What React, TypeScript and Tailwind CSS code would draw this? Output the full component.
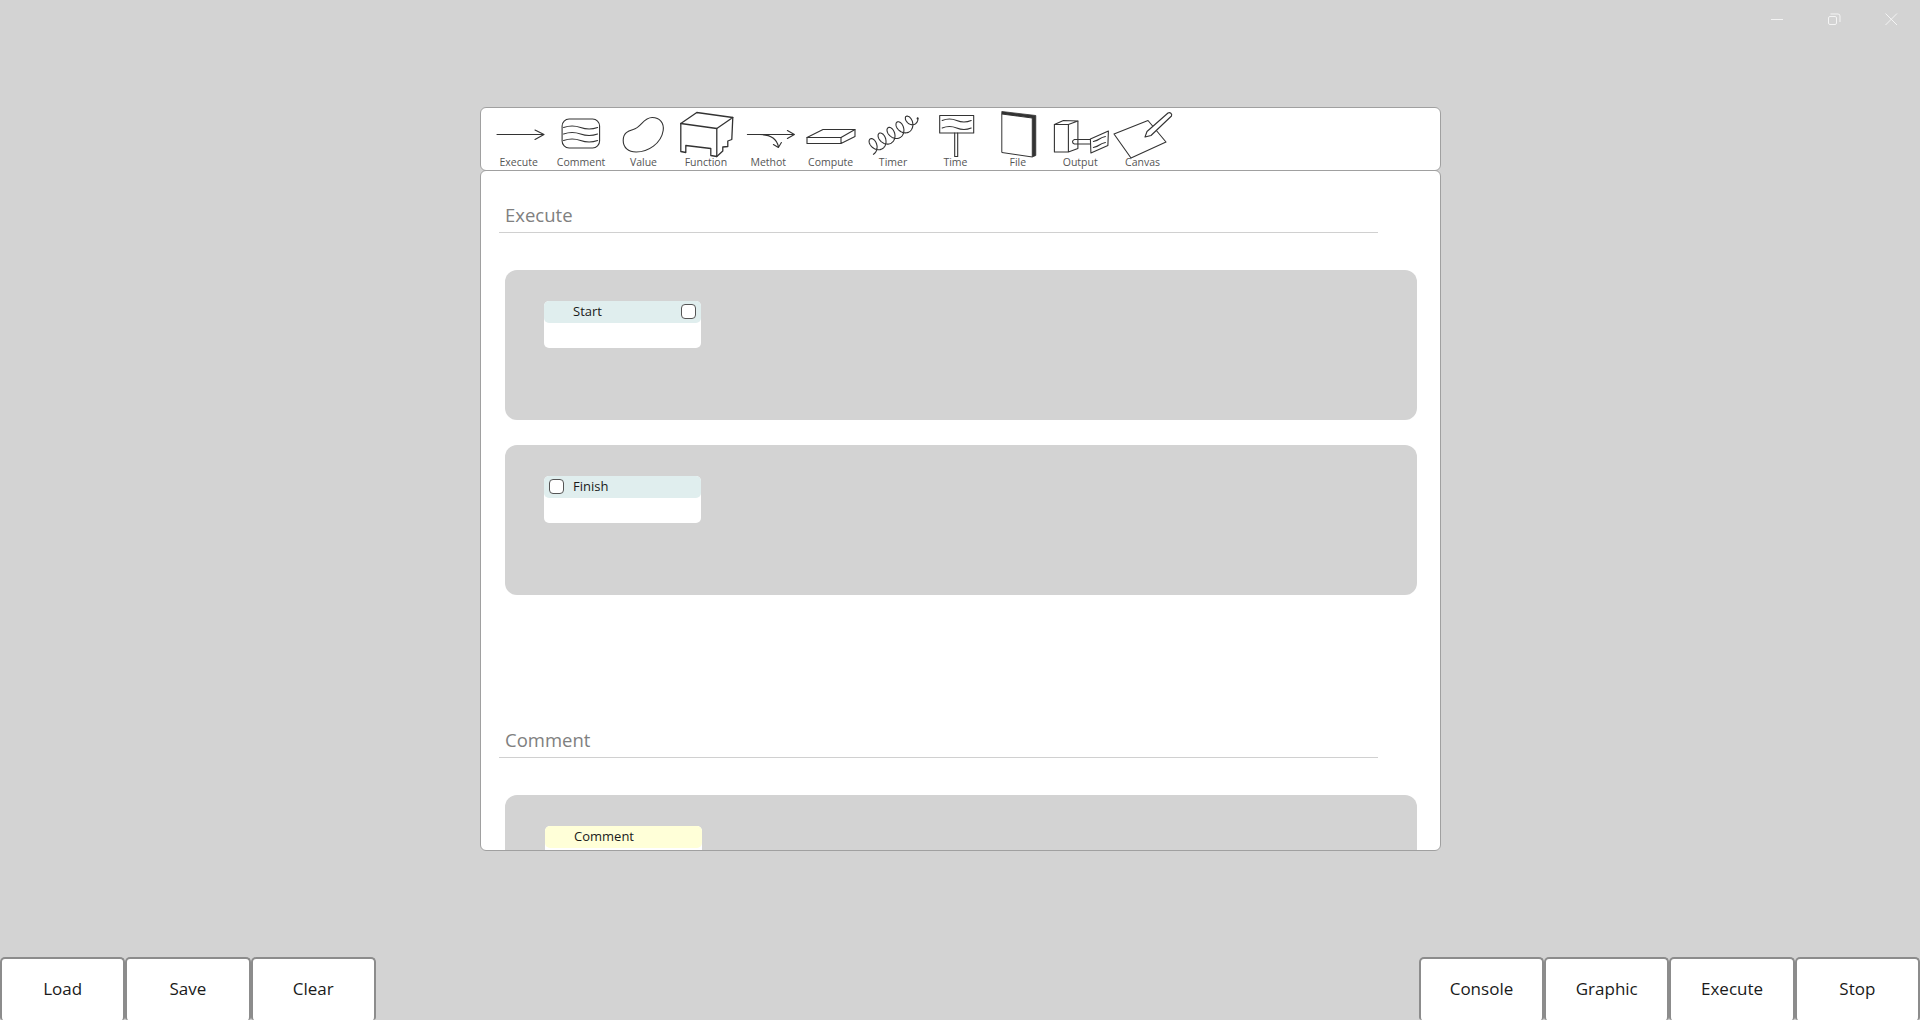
import React from 'react';

const stroke = { fill: 'none', stroke: '#333', strokeWidth: 1.1, strokeLinejoin: 'round' as const, strokeLinecap: 'round' as const };

// spiral of the timer icon, drawn along its diagonal
const timerCoil = (() => {
  const pts: string[] = [];
  for (let i = 0; i <= 300; i++) {
    const t = i / 300;
    const a = t * Math.PI * 2 * 5.25;
    const fade = t > 0.86 ? 0.25 + 0.75 * (1 - t) / 0.14 : 1;
    const along = 5.5 * Math.sin(a) * fade;
    const across = 7.4 * Math.cos(a) * fade;
    const x = 870 + 47 * t + along * 0.85 + across * 0.52;
    const y = 147.500 - 29.500 * t - along * 0.52 + across * 0.85;
    pts.push(`${x.toFixed(1)} ${y.toFixed(1)}`);
  }
  return 'M' + pts.join(' L');
})();

const wave = (x: number, y: number, w: number) => {
  const s = w / 4;
  return `M${x} ${y} q${s} -3 ${s * 2} 0 t${s * 2} 0`;
};

const tools: { name: string; art: React.ReactNode }[] = [
  {
    name: 'Execute',
    art: <path {...stroke} d="M497 134 H544 M535 129.500 L544 134 L535 139" />
  },
  {
    name: 'Comment',
    art: <g {...stroke}>
        <rect x="562.500" y="118.500" width="37.500" height="29" rx="7" />
        <path d={wave(564, 127, 34)} />
        <path d={wave(564, 133.500, 34)} />
        <path d={wave(564, 140, 34)} />
      </g>
  },
  {
    name: 'Value',
    art: <path {...stroke} d="M623 140 C623 132 628 130.500 633 129 C641 127 643 117 652 117 C660 117 664 123 663 130 C661 143 648 151.500 636 151.500 C628 151.500 623 147 623 140 Z" />
  },
  {
    name: 'Function',
    art: <g {...stroke} strokeWidth={1.3}>
        <path d="M681 123 L697 112 L733 117 L717 128 Z" />
        <path d="M681 123 V151 L686 152 V145 L711 148 V155 L717 156 V128" />
        <path d="M733 117 L732 139 L728 140.500 V146 L723 146.500 V150.500 L717 156" />
      </g>
  },
  {
    name: 'Methot',
    art: <g {...stroke}>
        <path d="M747 134 H794 M787 130 L794 134 L787 138" />
        <path d="M759 134 C768 134 776 137 778 146 M773 144 L778 147 L781 142" />
      </g>
  },
  {
    name: 'Compute',
    art: <g {...stroke}>
        <path d="M807 137 L823 129 H855 L841 137 Z" />
        <path d="M807 137 V143 H841 L855 136 V129 M841 137 V143" />
      </g>
  },
  {
    name: 'Timer',
    art: <g>
        <path {...stroke} d={timerCoil} />
        <circle cx="918" cy="118" r="1" fill="#333" />
      </g>
  },
  {
    name: 'Time',
    art: <g {...stroke}>
        <rect x="939.500" y="115" width="34" height="17.500" />
        <path d={wave(942, 120, 29)} />
        <path d={wave(942, 127.500, 29)} />
        <path d="M954.500 132.500 V156 H957.500 V132.500" />
      </g>
  },
  {
    name: 'File',
    art: <g>
        <path d="M1002 111 L1036 115 V155 L1032.500 156.500 V117.500 L1002 113.500 Z" fill="#333" stroke="#333" strokeWidth="0.8" strokeLinejoin="round" />
        <path d="M1002 113.500 L1032.500 117.500 V156.500 L1002 152 Z" fill="#fff" stroke="#333" strokeWidth="1" strokeLinejoin="round" />
      </g>
  },
  {
    name: 'Output',
    art: <g {...stroke}>
        <path d="M1054 124 L1063 120 L1077.500 120.500 L1068 124 Z" />
        <path d="M1054 124 H1068 V151.500 H1054 Z M1068 151.500 L1077.500 148 V120.500" />
        <path d="M1074 139 H1090 M1074 143.500 H1090 M1074 139 C1071.500 140 1071.500 142.500 1074 143.500" />
        <path d="M1090 138.500 L1108 130.500 L1107.500 145 L1090.500 152.500 Z" />
        <path d="M1093 141 q4 -1 6 -2.500 t6 -2.500 M1093 147 q4 -1 6 -2.500 t6 -2.500" />
      </g>
  },
  {
    name: 'Canvas',
    art: <g {...stroke}>
        <path d="M1114 133.500 L1148 120 L1166 141.500 L1131 157.500 Z" fill="#fff" />
        <path d="M1145 136.500 L1147 131 L1168 112.500 C1170 111.500 1172.500 113 1171.500 115.500 L1151 135 Z" fill="#fff" />
      </g>
  }
];

const Node = ({ title, tone, box, inset }: { title: string; tone: string; box?: 'left' | 'right'; inset: string }) => (
  <div className={`w-[157px] h-[47px] mt-[30px] bg-white rounded-[5px] ${inset}`}>
    <div className={`relative h-[22px] rounded-[5px] pl-[29px] text-[13px] leading-[21px] text-[#1a1a1a] ${tone}`}>
      {title}
      {box === 'left' && <span className="absolute left-[5px] top-[3px] w-[15px] h-[15px] bg-white rounded-[4px] border border-[#555]" />}
      {box === 'right' && <span className="absolute right-[5px] top-[3px] w-[15px] h-[15px] bg-white rounded-[4px] border border-[#555]" />}
    </div>
  </div>
);

const Heading = ({ text }: { text: string }) => (
  <div className="ml-[18px] w-[879px] h-[34px] border-b border-[#d0d0d0] pl-[6px] pt-[3px] text-[18.500px] leading-[25px] text-[#808080]">
    {text}
  </div>
);

const Btn = ({ label }: { label: string }) => (
  <button className="w-[125.300px] h-[63px] pb-[2px] bg-white border-2 border-b-0 border-[#8c8c8c] rounded-t-[5px] rounded-b-[3px] text-[17px] text-[#1a1a1a]">
    {label}
  </button>
);

export default function App() {
  return (
    <div className="relative h-[1020px] w-full overflow-hidden bg-[#d3d3d3] font-['Open_Sans',sans-serif]">
      {/* window controls */}
      <svg className="absolute right-0 top-0" width="160" height="40" viewBox="1760 0 160 40" fill="none" stroke="#f4f4f4" strokeWidth="1">
        <path d="M1771 19.500 H1783" />
        <rect x="1828.500" y="16.500" width="8" height="8" rx="1.500" />
        <path d="M1830.500 14 H1838 Q1840 14 1840 16 V22" />
        <path d="M1885.500 13.500 L1897 25 M1897 13.500 L1885.500 25" />
      </svg>

      <div className="flex flex-col items-center pt-[107px] pl-[1px]">
        {/* tool strip */}
        <div className="w-[961px] h-[64px] bg-white border border-[#a0a0a0] rounded-[6px] flex pl-[6px] pt-[2px]">
          {tools.map((tool, i) => (
            <div key={tool.name} className="w-[62.400px] shrink-0 flex flex-col items-center">
              <svg width="62.400" height="45" viewBox={`${487 + 62.4 * i} 109.500 62.400 45`} className="block overflow-visible shrink-0">
                {tool.art}
              </svg>
              <span className="text-[10.500px] leading-[14px] text-[#555] ml-[1px] whitespace-nowrap">{tool.name}</span>
            </div>
          ))}
        </div>

        {/* node palette */}
        <div className="-mt-[1px] w-[961px] h-[681px] bg-white border border-[#a0a0a0] rounded-[6px] overflow-hidden pt-[28px]">
          <Heading text="Execute" />
          <div className="ml-[24px] w-[912px] h-[150px] mt-[37px] bg-[#d3d3d3] rounded-[12px] pt-px overflow-hidden">
            <Node title="Start" tone="bg-[#e0eeee]" box="right" inset="ml-[39px]" />
          </div>
          <div className="ml-[24px] w-[912px] h-[150px] mt-[25px] bg-[#d3d3d3] rounded-[12px] pt-px overflow-hidden">
            <Node title="Finish" tone="bg-[#e0eeee]" box="left" inset="ml-[39px]" />
          </div>
          <div className="mt-[129px]">
            <Heading text="Comment" />
          </div>
          <div className="ml-[24px] w-[912px] h-[150px] mt-[37px] bg-[#d3d3d3] rounded-[12px] pt-px overflow-hidden">
            <Node title="Comment" tone="bg-[#ffffd8]" inset="ml-[40px]" />
          </div>
        </div>
      </div>

      <div className="absolute bottom-0 left-0 flex">
        <Btn label="Load" />
        <Btn label="Save" />
        <Btn label="Clear" />
      </div>
      <div className="absolute bottom-0 right-0 flex">
        <Btn label="Console" />
        <Btn label="Graphic" />
        <Btn label="Execute" />
        <Btn label="Stop" />
      </div>
    </div>
  );
}
